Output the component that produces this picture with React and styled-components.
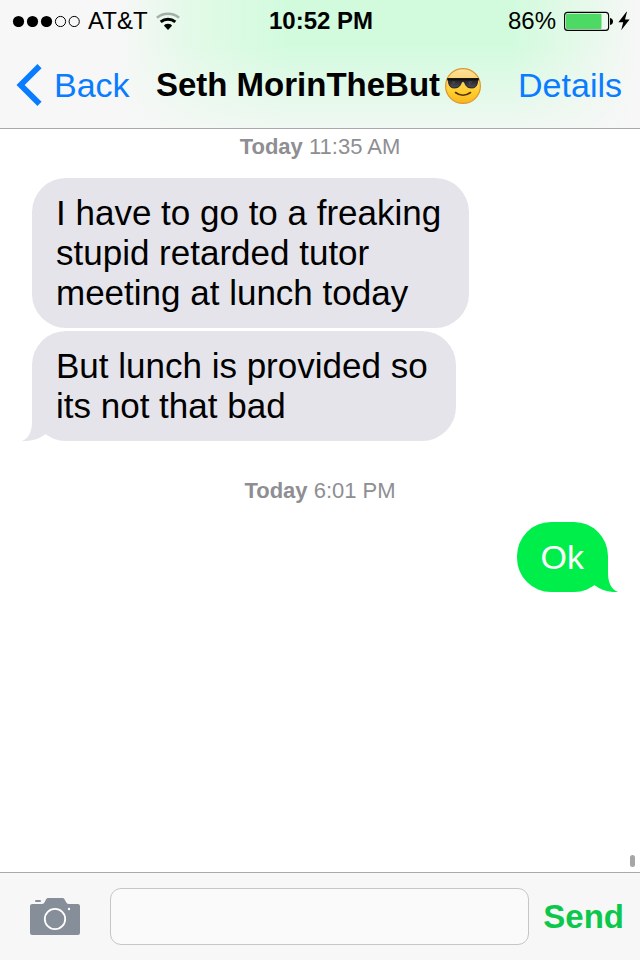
import React from 'react';
import styled, { createGlobalStyle } from 'styled-components';

const colors = {
  blue: '#0a7cff',
  green: '#00ee49',
  send: '#0bc84c',
  incoming: '#e5e4ea',
  bar: '#f7f7f7',
  border: '#a9a9ab',
  muted: '#8e8e93',
};

const thread = [
  { id: 1, day: 'Today', time: '11:35 AM' },
  { id: 2, text: 'I have to go to a freaking\nstupid retarded tutor\nmeeting at lunch today' },
  { id: 3, text: 'But lunch is provided so\nits not that bad', tail: true },
  { id: 4, day: 'Today', time: '6:01 PM' },
  {
    id: 5, text: 'Ok', tail: true, own: true,
  },
];

const SignalIcon = () => (
  <svg width="68" height="12" viewBox="0 0 68 12" aria-hidden="true">
    {[6.5, 20.5, 34.5].map((x) => <circle key={x} cx={x} cy="6.5" r="5.6" fill="#000" />)}
    {[48.5, 62.2].map((x) => <circle key={x} cx={x} cy="6.5" r="5.1" fill="none" stroke="#000" strokeWidth="1" />)}
  </svg>
);

const WifiIcon = () => (
  <svg width="24" height="18" viewBox="0 0 24 18" fill="none" aria-hidden="true">
    <path d="M1 5.8C7 .4 17 .4 23 5.8" stroke="#a3b0a8" strokeWidth="2.600" />
    <path d="M4.700 9.900C9 6.200 15 6.200 19.300 9.900" stroke="#000" strokeWidth="3" />
    <path d="M12 18L8 13.800C8.300 11 15.700 11 16 13.800Z" fill="#000" />
  </svg>
);

const BatteryIcon = () => (
  <svg width="50" height="20" viewBox="0 0 50 20" aria-hidden="true">
    <rect x=".6" y="1.4" width="44" height="18" rx="3" fill="none" stroke="#000" strokeWidth="1.1" />
    <rect x="2" y="2.8" width="35.5" height="15.2" rx="1" fill="#4cd964" />
    <path d="M46 7c2.200 .3 3 1.600 3 3.500s-.8 3.200-3 3.500z" fill="#000" />
  </svg>
);

const BoltIcon = () => (
  <svg width="12" height="20" viewBox="0 0 12 20" aria-hidden="true">
    <path d="M8.500 .8L.4 11.200h4.800L3.200 19.200L11.600 8.500H7L9 .8z" fill="#000" />
  </svg>
);

const ChevronIcon = () => (
  <svg width="26" height="42" viewBox="0 0 26 42" aria-hidden="true">
    <path d="M23.500 2.100L4.600 21L23.500 39.900" fill="none" stroke={colors.blue} strokeWidth="5.800" />
  </svg>
);

const SunglassesEmoji = () => (
  <svg width="38" height="38" viewBox="0 0 38 38" role="img" aria-label="smiling face with sunglasses">
    <defs>
      <linearGradient id="face" x1="0" y1="0" x2="0" y2="1">
        <stop offset="0" stopColor="#fbe3a4" />
        <stop offset=".35" stopColor="#fcd16b" />
        <stop offset=".65" stopColor="#ffd02c" />
        <stop offset="1" stopColor="#f9b51f" />
      </linearGradient>
      <linearGradient id="lens" x1="0" y1="0" x2="0" y2="1">
        <stop offset="0" stopColor="#17171a" />
        <stop offset="1" stopColor="#50505a" />
      </linearGradient>
    </defs>
    <circle cx="19" cy="20" r="17.400" fill="url(#face)" stroke="#dc982f" strokeWidth="1.200" />
    <path d="M3.500 12.500H34.500L33.600 15.500C33 20.500 31 22 27.500 22C23.500 22 21.600 20 20.500 16.200Q19 14.800 17.500 16.200C16.400 20 14.500 22 10.500 22C7 22 5 20.500 4.400 15.500Z" fill="url(#lens)" stroke="#101012" strokeWidth=".8" />
    <path d="M3.500 12.500H34.500V14.200H3.500Z" fill="#101012" />
    <path d="M8 15l4 .4l-3.200 4zM24.500 15l4 .4l-3.200 4z" fill="#62626c" opacity=".4" />
    <path d="M11.500 26.500Q19 32 26.500 26.500" fill="none" stroke="#54300c" strokeWidth="1.600" strokeLinecap="round" />
  </svg>
);

const CameraIcon = () => (
  <svg width="50" height="38" viewBox="0 0 50 38" aria-hidden="true">
    <path d="M2.500 6H12C13.500 6 14 5.300 14.700 4L16 1.500C16.700 .2 17.500 0 18.500 0H32C33.200 0 34 .3 34.600 1.500L36 4C36.700 5.300 37.300 6 38.700 6H47.500C49.200 6 50 6.800 50 8.500V34.500C50 36.200 49.200 37 47.500 37H2.500C.8 37 0 36.200 0 34.500V8.500C0 6.800 .8 6 2.500 6Z" fill="#858e99" />
    <rect x="5" y="2" width="6" height="2" rx="1" fill="#858e99" />
    <circle cx="25" cy="21" r="10.200" fill="none" stroke="#fff" strokeWidth="1.800" />
    <circle cx="39" cy="11" r="1.200" fill="#fff" />
  </svg>
);

const Message = ({ text, own, tail }) => (
  <Bubble $own={own}>
    {text}
    {tail && (
      <Tail $own={own} viewBox="0 0 30 35" aria-hidden="true">
        <path d="M10 0V15C10 26 7 32 0 35C9 35.600 17 33 23 28.500L30 20Z" fill="currentColor" />
      </Tail>
    )}
  </Bubble>
);

const App = () => (
  <Screen>
    <GlobalStyle />
    <Header>
      <StatusBar>
        <StatusGroup>
          <SignalIcon />
          <span>AT&amp;T</span>
          <WifiIcon />
        </StatusGroup>
        <Clock>10:52 PM</Clock>
        <StatusGroup $end>
          <span>86%</span>
          <Power>
            <BatteryIcon />
            <BoltIcon />
          </Power>
        </StatusGroup>
      </StatusBar>
      <NavBar>
        <NavLink href="#back">
          <ChevronIcon />
          Back
        </NavLink>
        <Title>
          Seth MorinTheBut
          <SunglassesEmoji />
        </Title>
        <NavLink href="#details" $end>Details</NavLink>
      </NavBar>
    </Header>
    <Thread>
      {thread.map(({ id, day, ...item }) => (day ? (
        <Timestamp key={id}>
          <b>{day}</b>
          {' '}
          {item.time}
        </Timestamp>
      ) : (
        <Message key={id} {...item} />
      )))}
      <ScrollThumb />
    </Thread>
    <Composer onSubmit={(e) => e.preventDefault()}>
      <CameraButton type="button" aria-label="Attach photo"><CameraIcon /></CameraButton>
      <MessageInput type="text" aria-label="Message" />
      <SendButton type="submit">Send</SendButton>
    </Composer>
  </Screen>
);

const GlobalStyle = createGlobalStyle`
  * {
    box-sizing: border-box;
  }

  body {
    margin: 0;
    background: #fff;
    color: #000;
    font-family: "Liberation Sans", Arial, sans-serif;
  }

  svg {
    display: block;
    flex-shrink: 0;
  }
`;

const Screen = styled.div`
  display: flex;
  flex-direction: column;
  min-height: 100vh;
`;

const Header = styled.header`
  border-bottom: 1px solid ${colors.border};
  background:
    linear-gradient(to bottom, rgba(247, 247, 247, 0) 35%, rgba(247, 247, 247, 0.8) 100%),
    linear-gradient(to right, ${colors.bar} 18%, #e0fae6 32%, #d2fbde 45%, #d2fbde 80%, #e4f9e9 90%, ${colors.bar} 100%);
`;

const StatusBar = styled.div`
  display: grid;
  grid-template-columns: 1fr auto 1fr;
  align-items: center;
  height: 42px;
  padding: 0 10px 0 12px;
  font-size: 24px;
`;

const StatusGroup = styled.div`
  display: flex;
  align-items: center;
  justify-content: ${({ $end }) => ($end ? 'flex-end' : 'flex-start')};
  gap: 8px;
`;

const Power = styled.span`
  display: flex;
  align-items: center;
  gap: 4px;
`;

const Clock = styled.span`
  font-weight: bold;
`;

const NavBar = styled.nav`
  display: grid;
  grid-template-columns: 1fr auto 1fr;
  align-items: center;
  height: 86px;
  padding: 0 18px 0 16px;
`;

const NavLink = styled.a`
  display: flex;
  align-items: center;
  justify-content: ${({ $end }) => ($end ? 'flex-end' : 'flex-start')};
  gap: 12px;
  color: ${colors.blue};
  font-size: 34px;
  text-decoration: none;
`;

const Title = styled.h1`
  display: flex;
  align-items: center;
  gap: 4px;
  margin: 0;
  font-size: 33px;
  font-weight: bold;
`;

const Thread = styled.main`
  position: relative;
  display: flex;
  flex: 1;
  flex-direction: column;
  align-items: flex-start;
  gap: 3px;
  padding: 4px 32px;
`;

const Timestamp = styled.p`
  align-self: center;
  margin: 0 0 14px;
  color: ${colors.muted};
  font-size: 22px;
  line-height: 28px;

  div + & {
    margin-top: 33px;
  }
`;

const Bubble = styled.div`
  position: relative;
  align-self: ${({ $own }) => ($own ? 'flex-end' : 'flex-start')};
  padding: ${({ $own }) => ($own ? '15px 24px' : '15px 28px 15px 24px')};
  border-radius: 34px;
  background: ${({ $own }) => ($own ? colors.green : colors.incoming)};
  color: ${({ $own }) => ($own ? '#fff' : '#000')};
  font-size: ${({ $own }) => ($own ? '34px' : '35px')};
  line-height: 40px;
  white-space: pre-line;
`;

const Tail = styled.svg`
  position: absolute;
  bottom: 0;
  ${({ $own }) => ($own ? 'right: -10px; transform: scaleX(-1);' : 'left: -10px;')}
  width: 30px;
  height: 35px;
  color: ${({ $own }) => ($own ? colors.green : colors.incoming)};
`;

const ScrollThumb = styled.span`
  position: absolute;
  right: 5px;
  bottom: 5px;
  width: 5px;
  height: 12px;
  border-radius: 3px;
  background: #a6a6a6;
`;

const Composer = styled.form`
  display: flex;
  align-items: center;
  padding: 15px 16px 15px 30px;
  border-top: 1px solid ${colors.border};
  background: ${colors.bar};
`;

const CameraButton = styled.button`
  margin-right: 30px;
  padding: 0;
  border: none;
  background: transparent;
  cursor: pointer;
`;

const MessageInput = styled.input`
  flex: 1;
  min-width: 0;
  height: 57px;
  padding: 0 16px;
  border: 1px solid #c5c6c8;
  border-radius: 11px;
  background: #fafafa;
  font: inherit;
  font-size: 34px;
`;

const SendButton = styled.button`
  margin-left: 14px;
  padding: 0;
  border: none;
  background: transparent;
  color: ${colors.send};
  font-family: inherit;
  font-size: 33px;
  font-weight: bold;
  cursor: pointer;
`;

export default App;
